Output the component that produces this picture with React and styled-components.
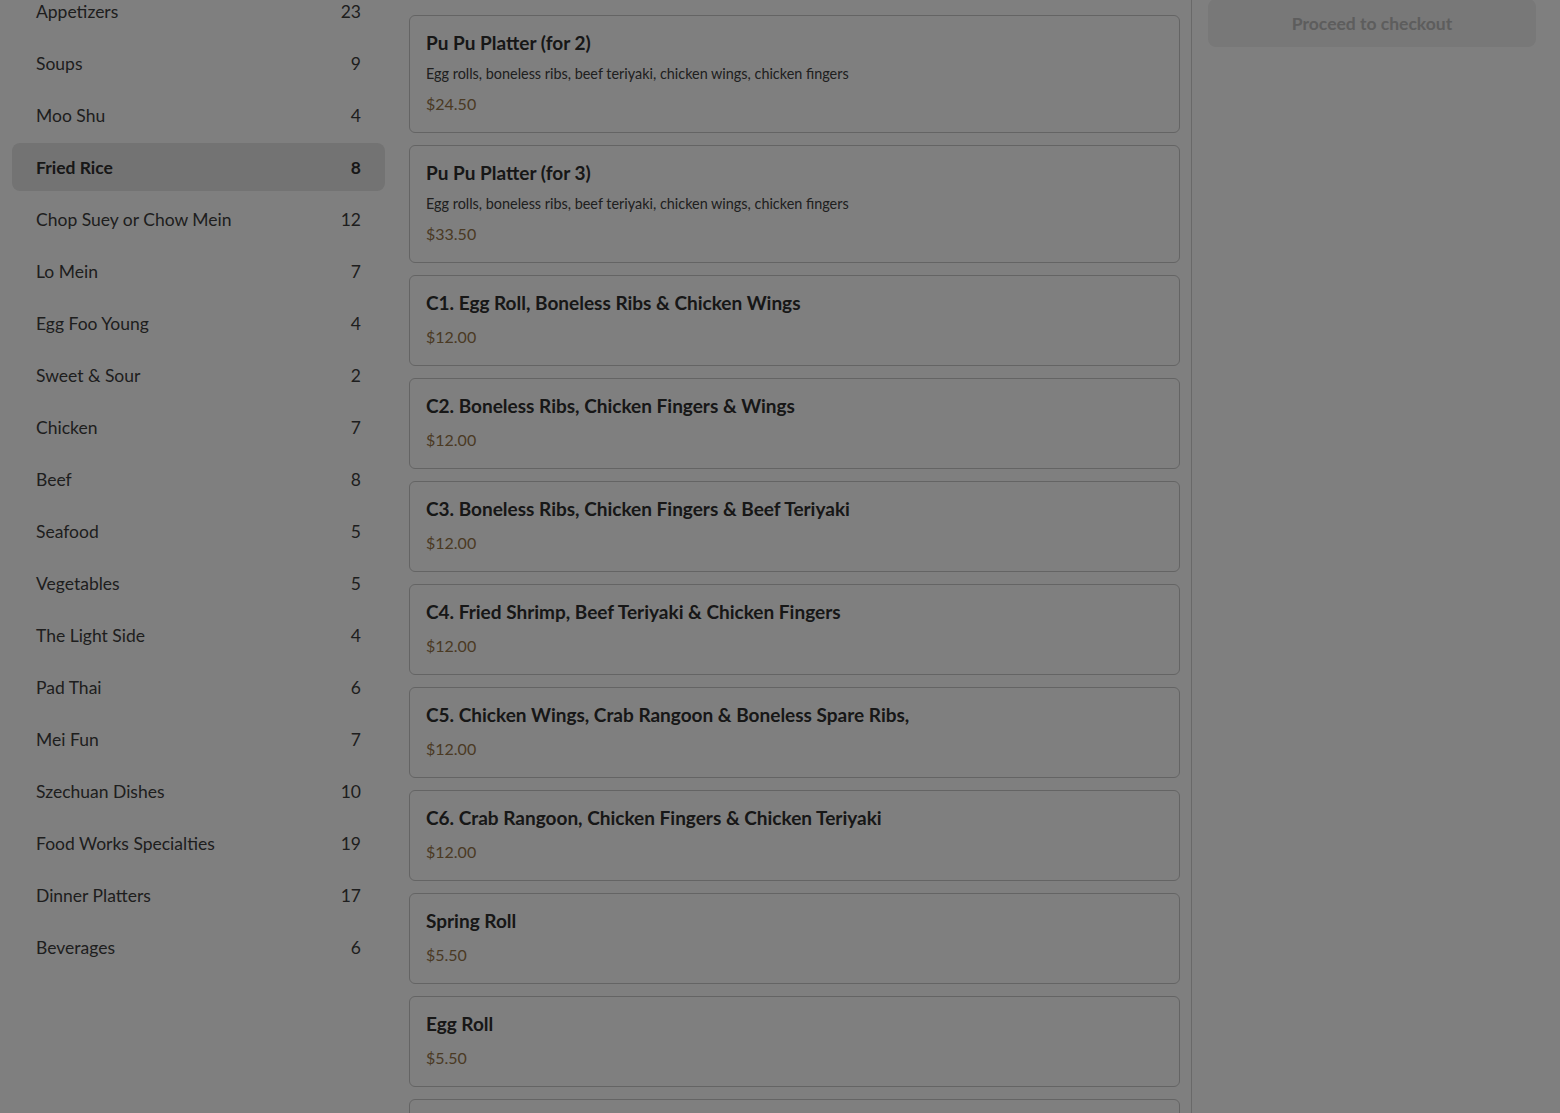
import React from 'react';
import styled, { createGlobalStyle } from 'styled-components';

const GlobalStyle = createGlobalStyle`
  html, body {
    margin: 0;
    padding: 0;
    background: #ffffff;
    font-family: Lato, "Open Sans", Arial, sans-serif;
    overflow: hidden;
  }
  * { box-sizing: border-box; }
`;

const categories = [
  ['Appetizers', 23],
  ['Soups', 9],
  ['Moo Shu', 4],
  ['Fried Rice', 8],
  ['Chop Suey or Chow Mein', 12],
  ['Lo Mein', 7],
  ['Egg Foo Young', 4],
  ['Sweet & Sour', 2],
  ['Chicken', 7],
  ['Beef', 8],
  ['Seafood', 5],
  ['Vegetables', 5],
  ['The Light Side', 4],
  ['Pad Thai', 6],
  ['Mei Fun', 7],
  ['Szechuan Dishes', 10],
  ['Food Works Specialties', 19],
  ['Dinner Platters', 17],
  ['Beverages', 6],
];

const platterDesc = 'Egg rolls, boneless ribs, beef teriyaki, chicken wings, chicken fingers';

const items = [
  { name: 'Pu Pu Platter (for 2)', desc: platterDesc, price: '$24.50' },
  { name: 'Pu Pu Platter (for 3)', desc: platterDesc, price: '$33.50' },
  { name: 'C1. Egg Roll, Boneless Ribs & Chicken Wings', price: '$12.00' },
  { name: 'C2. Boneless Ribs, Chicken Fingers & Wings', price: '$12.00' },
  { name: 'C3. Boneless Ribs, Chicken Fingers & Beef Teriyaki', price: '$12.00' },
  { name: 'C4. Fried Shrimp, Beef Teriyaki & Chicken Fingers', price: '$12.00' },
  { name: 'C5. Chicken Wings, Crab Rangoon & Boneless Spare Ribs,', price: '$12.00' },
  { name: 'C6. Crab Rangoon, Chicken Fingers & Chicken Teriyaki', price: '$12.00' },
  { name: 'Spring Roll', price: '$5.50' },
  { name: 'Egg Roll', price: '$5.50' },
  { name: 'Vegetable Egg Roll', price: '$5.50' },
  { name: 'Crab Rangoon', price: '$8.95' },
];

const Page = styled.div`
  height: 100vh;
  overflow: hidden;
`;

const Layout = styled.div`
  display: grid;
  grid-template-columns: 397px 795px 1fr;
  margin-top: -25px;
`;

const Sidebar = styled.nav`
  display: flex;
  flex-direction: column;
  gap: 4px;
  padding: 12px 12px;
`;

const CategoryRow = styled.div`
  display: flex;
  align-items: center;
  justify-content: space-between;
  height: 48px;
  padding: 0 24px;
  border-radius: 8px;
  font-size: 17.5px;
  color: ${p => (p.active ? '#2e2e2e' : '#3c3c3c')};
  font-weight: ${p => (p.active ? 700 : 400)};
  background: ${p => (p.active ? '#e6e6e6' : 'transparent')};
`;

const Menu = styled.main`
  display: flex;
  flex-direction: column;
  gap: 12px;
  padding: 40px 11px 40px 12px;
  border-right: 1px solid #d2d2d2;
`;

const Card = styled.div`
  border: 1px solid #c8c8c8;
  border-radius: 6px;
  padding: 16px;
  background: #ffffff;
`;

const ItemName = styled.div`
  font-size: 19px;
  font-weight: 700;
  line-height: 22px;
  color: #2e2e2e;
  margin-bottom: 10px;
`;

const ItemDesc = styled.div`
  font-size: 14.4px;
  line-height: 20px;
  color: #404040;
  margin-bottom: 7px;
`;

const ItemPrice = styled.div`
  font-size: 16px;
  line-height: 25px;
  color: #957448;
`;

const Cart = styled.aside`
  padding: 24px 24px 0 16px;
`;

const CheckoutButton = styled.button`
  width: 100%;
  height: 48px;
  border: none;
  border-radius: 8px;
  background: #f0f0f0;
  color: #bababa;
  font-family: inherit;
  font-size: 17.5px;
  font-weight: 700;
  cursor: not-allowed;
`;

const Backdrop = styled.div`
  position: fixed;
  inset: 0;
  background: rgba(0, 0, 0, 0.5);
  z-index: 10;
`;

export default function App() {
  return (
    <Page>
      <GlobalStyle />
      <Layout>
        <Sidebar>
          {categories.map(([name, count]) => (
            <CategoryRow key={name} active={name === 'Fried Rice'}>
              <span>{name}</span>
              <span>{count}</span>
            </CategoryRow>
          ))}
        </Sidebar>
        <Menu>
          {items.map(item => (
            <Card key={item.name}>
              <ItemName>{item.name}</ItemName>
              {item.desc && <ItemDesc>{item.desc}</ItemDesc>}
              <ItemPrice>{item.price}</ItemPrice>
            </Card>
          ))}
        </Menu>
        <Cart>
          <CheckoutButton disabled>Proceed to checkout</CheckoutButton>
        </Cart>
      </Layout>
      <Backdrop />
    </Page>
  );
}
